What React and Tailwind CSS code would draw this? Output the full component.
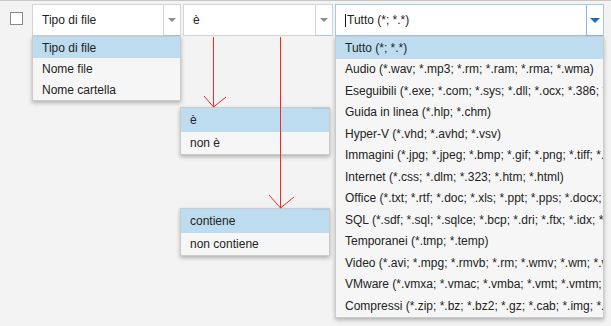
const TIPI = [
  "Tutto (*; *.*)",
  "Audio (*.wav; *.mp3; *.rm; *.ram; *.rma; *.wma)",
  "Eseguibili (*.exe; *.com; *.sys; *.dll; *.ocx; *.386; *.bat; *.cmd)",
  "Guida in linea (*.hlp; *.chm)",
  "Hyper-V (*.vhd; *.avhd; *.vsv)",
  "Immagini (*.jpg; *.jpeg; *.bmp; *.gif; *.png; *.tiff; *.ico)",
  "Internet (*.css; *.dlm; *.323; *.htm; *.html)",
  "Office (*.txt; *.rtf; *.doc; *.xls; *.ppt; *.pps; *.docx; *.xlsx)",
  "SQL (*.sdf; *.sql; *.sqlce; *.bcp; *.dri; *.ftx; *.idx; *.mdf)",
  "Temporanei (*.tmp; *.temp)",
  "Video (*.avi; *.mpg; *.rmvb; *.rm; *.wmv; *.wm; *.vob)",
  "VMware (*.vmxa; *.vmac; *.vmba; *.vmt; *.vmtm; *.vmx)",
  "Compressi (*.zip; *.bz; *.bz2; *.gz; *.cab; *.img; *.iso)",
];

function Freccia({ attiva }) {
  return attiva ? (
    <span className="w-0 h-0 border-l-[5px] border-r-[5px] border-t-[5px] border-l-transparent border-r-transparent border-t-[#1a6cc2]" />
  ) : (
    <span className="w-0 h-0 border-l-[4px] border-r-[4px] border-t-[4px] border-l-transparent border-r-transparent border-t-[#8c8c8c]" />
  );
}

function Campo({ testo, larghezza, attiva }) {
  return (
    <div
      className={`${larghezza} h-[32px] bg-white border flex ${
        attiva ? "border-[#a9c6e3]" : "border-[#d3d3d3]"
      }`}
    >
      <div className="flex-1 flex items-center pl-[9px]">
        {attiva && <span className="w-px h-[13px] bg-[#111] mr-px" />}
        {testo}
      </div>
      <div
        className={`w-[17px] flex items-center justify-center border-l ${
          attiva ? "border-[#8fb6df] border-r-0 border-b border-b-[#8fb6df] -mb-px" : "border-[#d3d3d3] border-b border-b-[#a9c6e3] -mb-px"
        }`}
      >
        <Freccia attiva={attiva} />
      </div>
    </div>
  );
}

function Menu({ voci, className, alta = "h-[21px]", lineaBlu }) {
  return (
    <div className={`absolute bg-[#f6f6f6] border border-[#cbcbcb] shadow-[0_2px_4px_rgba(0,0,0,0.28)] overflow-hidden ${className}`}>
      {lineaBlu && <div className="absolute top-0 right-0 w-[17px] h-px bg-[#a9c6e3]" />}
      {voci.map((v, i) => (
        <div
          key={v}
          className={`${Array.isArray(alta) ? alta[i] : alta} flex items-center pl-[9px] whitespace-nowrap ${
            i === 0 ? "bg-[#bedcef]" : ""
          }`}
        >
          {v}
        </div>
      ))}
    </div>
  );
}

export default function App() {
  return (
    <div className="relative w-[611px] h-[326px] bg-[#f3f3f3] overflow-hidden font-['Liberation_Sans',Arial,sans-serif] text-[12px] text-[#222]">
      <div className="h-px bg-[#c6c6c6]" />
      <div className="flex items-start pt-[3px]">
        <div className="ml-[10px] mt-[8px] mr-[9px] w-[13px] h-[13px] bg-white border border-[#8a8a8a]" />
        <Campo testo="Tipo di file" larghezza="w-[149px]" />
        <div className="w-[2px]" />
        <Campo testo="è" larghezza="w-[150px]" />
        <div className="w-[2px]" />
        <Campo testo="Tutto (*; *.*)" larghezza="w-[269px]" attiva />
      </div>

      <Menu voci={["Tipo di file", "Nome file", "Nome cartella"]} className="left-[32px] top-[36px] w-[149px]" />
      <Menu
        voci={["è", "non è"]}
        className="left-[180px] top-[107px] w-[150px]"
        alta={["h-[24px]", "h-[22px]"]}
        lineaBlu
      />
      <Menu
        voci={["contiene", "non contiene"]}
        className="left-[180px] top-[208px] w-[150px]"
        alta={["h-[24px]", "h-[22px]"]}
        lineaBlu
      />
      <Menu voci={TIPI} className="left-[335px] top-[36px] w-[269px]" alta="h-[21.5px]" />

      <svg className="absolute inset-0 pointer-events-none" width="611" height="326" viewBox="0 0 611 326">
        <g stroke="#f22" strokeWidth="1" fill="none">
          <line x1="213.5" y1="37" x2="213.5" y2="107" />
          <polyline points="204,96 213.5,107 226,97" />
          <line x1="280.5" y1="37" x2="280.5" y2="208" />
          <polyline points="269,195 280.5,208 294,197" />
        </g>
      </svg>
    </div>
  );
}
